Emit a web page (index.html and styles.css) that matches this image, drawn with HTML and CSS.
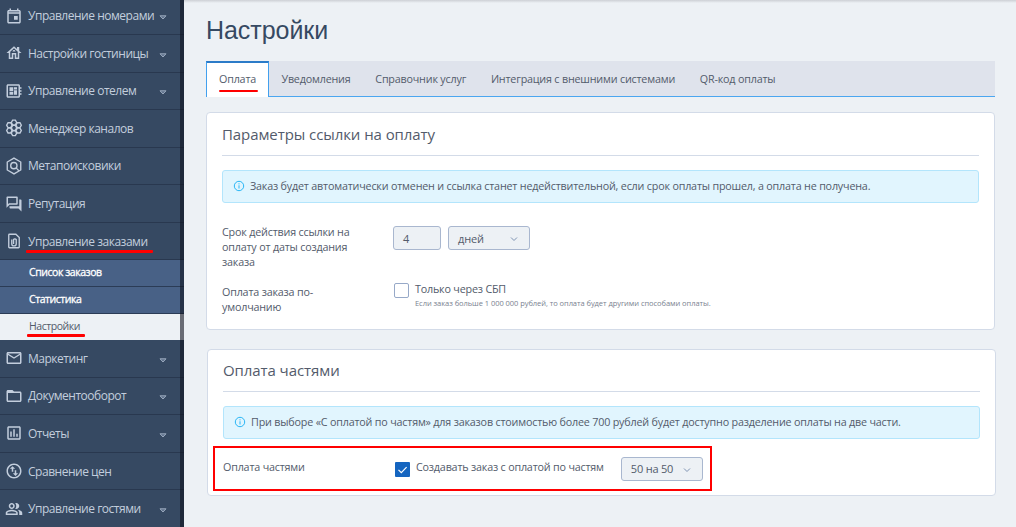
FILE: index.html
```html
<!DOCTYPE html>
<html lang="ru">

<head>
    <meta charset="UTF-8">
    <meta name="viewport" content="width=device-width, initial-scale=1.0">
    <title>Настройки</title>
    <link rel="stylesheet" href="styles.css">
</head>

<body>
    <aside class="sidebar">
        <ul class="menu">
            <li class="menu-item">
                <svg class="icon" viewBox="0 0 24 24"><path d="M19 4h-1V2h-2v2H8V2H6v2H5c-1.1 0-2 .9-2 2v14c0 1.1.9 2 2 2h14c1.1 0 2-.9 2-2V6c0-1.1-.9-2-2-2zm0 16H5V9h14v11zm0-13H5V6h14v1zm-7 5h5v5h-5z"/></svg>
                <span>Управление номерами</span>
                <svg class="arrow" viewBox="0 0 8 5"><path d="M1 .8h6L4 4z"/></svg>
            </li>
            <li class="menu-item">
                <svg class="icon" viewBox="0 0 24 24"><path d="M19 9.3V4h-3v2.6L12 3 2 12h3v8h6v-6h2v6h6v-8h3l-3-2.700zM17 18h-2v-6H9v6H7v-7.810l5-4.500 5 4.500V18zM10 10h4c0-1.100-.9-2-2-2s-2 .9-2 2z"/></svg>
                <span>Настройки гостиницы</span>
                <svg class="arrow" viewBox="0 0 8 5"><path d="M1 .8h6L4 4z"/></svg>
            </li>
            <li class="menu-item">
                <svg class="icon" viewBox="0 0 24 24"><path d="M22 9V7h-2V5c0-1.100-.9-2-2-2H4c-1.100 0-2 .9-2 2v14c0 1.100.9 2 2 2h14c1.100 0 2-.9 2-2v-2h2v-2h-2v-2h2v-2h-2V9h2zm-4 10H4V5h14v14zM6 13h5v4H6zm6-6h4v3h-4zM6 7h5v5H6zm6 4h4v6h-4z"/></svg>
                <span>Управление отелем</span>
                <svg class="arrow" viewBox="0 0 8 5"><path d="M1 .8h6L4 4z"/></svg>
            </li>
            <li class="menu-item">
                <svg class="icon icon-line" viewBox="0 0 24 24"><path d="M10.200 1.500h3.600l1.800 3.200-1.800 3.200h-3.600L8.400 4.700zM10.200 8.500h3.600l1.800 3.300-1.800 3.300h-3.600l-1.800-3.300zM10.200 15.700h3.600l1.800 3.200-1.800 3.200h-3.600l-1.800-3.200zM4 5h3.600l1.800 3.200-1.800 3.200H4L2.200 8.200zM4 12.200h3.600l1.800 3.200-1.800 3.200H4l-1.800-3.200zM16.400 5H20l1.800 3.200-1.800 3.200h-3.600l-1.800-3.200zM16.400 12.200H20l1.800 3.200-1.800 3.200h-3.600l-1.800-3.200z"/></svg>
                <span>Менеджер каналов</span>
            </li>
            <li class="menu-item">
                <svg class="icon icon-line" viewBox="0 0 24 24"><path d="M12 1.500l9 5.200v10.600l-9 5.200-9-5.200V6.700z"/><circle cx="11.800" cy="11.500" r="4.200"/><path d="M14.800 14.500l3.700 3.700"/></svg>
                <span>Метапоисковики</span>
            </li>
            <li class="menu-item">
                <svg class="icon" viewBox="0 0 24 24"><path d="M15 4v7H5.170L4 12.170V4h11m1-2H3c-.55 0-1 .45-1 1v14l4-4h10c.55 0 1-.45 1-1V3c0-.55-.45-1-1-1zm5 4h-2v9H6v2c0 .55.45 1 1 1h11l4 4V7c0-.55-.45-1-1-1z"/></svg>
                <span>Репутация</span>
            </li>
            <li class="menu-item">
                <svg class="icon icon-line" viewBox="0 0 24 24"><path d="M14.500 3H6c-.6 0-1 .4-1 1v16c0 .6.4 1 1 1h12c.6 0 1-.4 1-1V7.500z"/><path d="M9 10v5.500a3 3 0 0 0 6 0V10.200a2 2 0 0 0-3.600 0V16"/></svg>
                <span class="marked">Управление заказами</span>
            </li>
        </ul>
        <ul class="submenu">
            <li>Список заказов</li>
            <li>Статистика</li>
            <li class="active"><span class="marked">Настройки</span></li>
        </ul>
        <ul class="menu">
            <li class="menu-item">
                <svg class="icon" viewBox="0 0 24 24"><path d="M22 6c0-1.100-.9-2-2-2H4c-1.100 0-2 .9-2 2v12c0 1.100.9 2 2 2h16c1.100 0 2-.9 2-2V6zm-2 0l-8 5-8-5h16zm0 12H4V8l8 5 8-5v10z"/></svg>
                <span>Маркетинг</span>
                <svg class="arrow" viewBox="0 0 8 5"><path d="M1 .8h6L4 4z"/></svg>
            </li>
            <li class="menu-item">
                <svg class="icon" viewBox="0 0 24 24"><path d="M20 6h-8l-2-2H4c-1.100 0-2 .9-2 2v12c0 1.100.9 2 2 2h16c1.100 0 2-.9 2-2V8c0-1.100-.9-2-2-2zm0 12H4V8h16v10z"/></svg>
                <span>Документооборот</span>
                <svg class="arrow" viewBox="0 0 8 5"><path d="M1 .8h6L4 4z"/></svg>
            </li>
            <li class="menu-item">
                <svg class="icon" viewBox="0 0 24 24"><path d="M19 3H5c-1.100 0-2 .9-2 2v14c0 1.100.9 2 2 2h14c1.100 0 2-.9 2-2V5c0-1.100-.9-2-2-2zm0 16H5V5h14v14zM7 10h2v7H7zm4-3h2v10h-2zm4 6h2v4h-2z"/></svg>
                <span>Отчеты</span>
                <svg class="arrow" viewBox="0 0 8 5"><path d="M1 .8h6L4 4z"/></svg>
            </li>
            <li class="menu-item">
                <svg class="icon" viewBox="0 0 24 24"><path d="M12 2C6.480 2 2 6.480 2 12s4.480 10 10 10 10-4.480 10-10S17.520 2 12 2zm0 18c-4.410 0-8-3.590-8-8s3.590-8 8-8 8 3.590 8 8-3.590 8-8 8zM6.500 9L10 5.500 13.500 9H11v4H9V9H6.500zm11 6L14 18.500 10.500 15H13v-4h2v4h2.500z"/></svg>
                <span>Сравнение цен</span>
            </li>
            <li class="menu-item">
                <svg class="icon" viewBox="0 0 24 24"><path d="M16.670 13.130C18.040 14.060 19 15.320 19 17v3h4v-3c0-2.180-3.570-3.470-6.330-3.870zM15 12c2.210 0 4-1.790 4-4s-1.790-4-4-4c-.47 0-.91.1-1.330.24C14.500 5.270 15 6.580 15 8s-.5 2.730-1.330 3.760c.42.14.86.24 1.330.24zM9 12c2.210 0 4-1.790 4-4s-1.790-4-4-4-4 1.790-4 4 1.790 4 4 4zm0-6c1.100 0 2 .9 2 2s-.9 2-2 2-2-.9-2-2 .9-2 2-2zM9 13c-2.670 0-8 1.340-8 4v3h16v-3c0-2.660-5.330-4-8-4zm6 5H3v-.99C3.200 16.290 6.300 15 9 15s5.800 1.290 6 2v1z"/></svg>
                <span>Управление гостями</span>
                <svg class="arrow" viewBox="0 0 8 5"><path d="M1 .8h6L4 4z"/></svg>
            </li>
        </ul>
        <div class="scrollbar"></div>
    </aside>

    <main>
        <h1>Настройки</h1>

        <nav class="tabs">
            <a class="tab active"><span class="marked">Оплата</span></a>
            <a class="tab">Уведомления</a>
            <a class="tab">Справочник услуг</a>
            <a class="tab">Интеграция с внешними системами</a>
            <a class="tab">QR-код оплаты</a>
        </nav>

        <section class="panel">
            <h2>Параметры ссылки на оплату</h2>
            <div class="notice">
                <svg class="info" viewBox="0 0 12 12"><circle cx="6" cy="6" r="4.700"/><path d="M6 5.300v3.200M6 3.300v1.100"/></svg>
                <span>Заказ будет автоматически отменен и ссылка станет недействительной, если срок оплаты прошел, а оплата не получена.</span>
            </div>
            <div class="row row-period">
                <div class="label">Срок действия ссылки на оплату от даты создания заказа</div>
                <div class="field field-number">4</div>
                <div class="field field-select">дней
                    <svg class="chevron" viewBox="0 0 8 6"><path d="M1 1.500l3 3 3-3"/></svg>
                </div>
            </div>
            <div class="row row-default">
                <div class="label">Оплата заказа по-умолчанию</div>
                <div class="checkbox"></div>
                <div class="option">
                    <p>Только через СБП</p>
                    <p class="hint">Если заказ больше 1 000 000 рублей, то оплата будет другими способами оплаты.</p>
                </div>
            </div>
        </section>

        <section class="panel panel-parts">
            <h2>Оплата частями</h2>
            <div class="notice">
                <svg class="info" viewBox="0 0 12 12"><circle cx="6" cy="6" r="4.700"/><path d="M6 5.300v3.200M6 3.300v1.100"/></svg>
                <span>При выборе «С оплатой по частям» для заказов стоимостью более 700 рублей будет доступно разделение оплаты на две части.</span>
            </div>
            <div class="row row-parts">
                <div class="label">Оплата частями</div>
                <div class="checkbox checked">
                    <svg viewBox="0 0 15 15"><path d="M3.500 7.800l2.800 2.800 5.300-5.500"/></svg>
                </div>
                <div class="option">Создавать заказ с оплатой по частям</div>
                <div class="field field-select">50 на 50
                    <svg class="chevron" viewBox="0 0 8 6"><path d="M1 1.500l3 3 3-3"/></svg>
                </div>
            </div>
        </section>
    </main>
</body>

</html>
```
FILE: styles.css
```css
/* General Reset */
* {
    margin: 0;
    padding: 0;
    box-sizing: border-box;
}

body {
    display: flex;
    height: 527px;
    overflow: hidden;
    font-family: "Open Sans", "Noto Sans", sans-serif;
    font-size: 10.750px;
    letter-spacing: -0.19px;
    line-height: 15px;
    color: #535b6b;
    background: #edf1f5;
}

/* Sidebar */
.sidebar {
    position: relative;
    flex: none;
    width: 184px;
    background: #364962;
    overflow: hidden;
}

ul {
    list-style: none;
}

.menu:first-child {
    margin-top: -2.500px;
}

.menu-item {
    display: flex;
    align-items: center;
    height: 37.550px;
    padding: 0 17px 0 5px;
    border-bottom: 1px solid #29384f;
    font-size: 12px;
    letter-spacing: -0.48px;
    color: #c3cedd;
}

.menu-item span {
    flex: 1;
    white-space: nowrap;
}

.menu-item .marked {
    flex: none;
}

.icon {
    flex: none;
    width: 18px;
    height: 18px;
    margin-right: 5px;
    fill: #c3cedd;
}

.icon-line {
    fill: none;
    stroke: #c3cedd;
    stroke-width: 1.800;
}

.arrow {
    width: 8px;
    height: 5px;
    margin-top: 4px;
    fill: #5d708a;
    stroke: #9aa9bd;
}

.submenu li {
    height: 26.600px;
    padding-left: 29px;
    border-bottom: 1px solid #2b3c56;
    line-height: 25px;
    font-size: 10.500px;
    letter-spacing: -0.45px;
    color: #fff;
    background: #486186;
    -webkit-text-stroke: 0.3px #fff;
}

.submenu .active {
    color: #535b6b;
    background: #edf1f5;
    border-bottom: 0;
    line-height: 25px;
    -webkit-text-stroke: 0;
}

.scrollbar {
    position: absolute;
    top: 0;
    right: 0;
    width: 4px;
    height: 100%;
    background: rgba(16, 20, 31, 0.6);
}

/* Red pen underline */
.marked {
    position: relative;
}

.marked::after {
    content: "";
    position: absolute;
    left: -2px;
    right: -5px;
    bottom: -4px;
    height: 2.500px;
    border-radius: 1px;
    background: #f00;
}

/* Content */
main {
    flex: 1;
    min-width: 0;
    padding: 15px 21px 0 22px;
    background: linear-gradient(#cdd0d5, #edf1f5 3px);
}

h1 {
    font-family: "Liberation Sans", Arial, sans-serif;
    font-size: 25px;
    font-weight: normal;
    letter-spacing: -0.05px;
    line-height: 31px;
    color: #364962;
}

.tabs {
    display: flex;
    height: 36px;
    margin-top: 15px;
    background: #dfe3ec;
    border-bottom: 1px solid #4ba6f0;
}

.tab {
    padding: 0 12.400px;
    line-height: 37px;
}

.tab.active {
    height: 36px;
    padding: 0 12px;
    line-height: 33px;
    background: #fff;
    border: 1px solid #42a0ee;
    border-top: 2px solid #2b7bc8;
    border-bottom: 0;
}

.tab .marked {
    display: inline-block;
    line-height: 15px;
}

.tab .marked::after {
    left: 0;
    right: -2px;
    bottom: -5px;
}

.panel {
    height: 218px;
    margin-top: 15px;
    padding: 0 15px;
    background: #fff;
    border: 1px solid #d3dbe8;
    border-radius: 4px;
}

h2 {
    height: 43px;
    padding-top: 11px;
    border-bottom: 1px solid #d3dbe8;
    font-size: 15px;
    font-weight: normal;
    letter-spacing: -0.08px;
    line-height: 20px;
}

.notice {
    display: flex;
    align-items: center;
    height: 33px;
    margin-top: 14px;
    padding: 0 10px 1px;
    background: #e1f5fe;
    border: 1px solid #b3e5fc;
    border-radius: 3px;
    white-space: nowrap;
}

.info {
    width: 12px;
    height: 12px;
    margin-right: 5px;
    fill: none;
    stroke: #29b6f6;
}

.row {
    display: flex;
    align-items: flex-start;
}

.row-period {
    margin-top: 22px;
}

.row-period .field {
    margin-top: 1px;
    line-height: 23px;
}

.row-default {
    margin-top: 15px;
}

.label {
    flex: none;
    width: 135px;
    margin-right: 36px;
}

.field {
    position: relative;
    height: 24px;
    padding-left: 9px;
    font-size: 11px;
    line-height: 22px;
    background: #edf1f5;
    border: 1px solid #a9b7cf;
    border-radius: 3px;
}

.field-number {
    width: 48px;
    margin-right: 7px;
}

.field-select {
    width: 82px;
}

.chevron {
    position: absolute;
    top: 9px;
    right: 11px;
    width: 8px;
    height: 6px;
    fill: none;
    stroke: #7e93b3;
}

.checkbox {
    flex: none;
    width: 15px;
    height: 15px;
    margin: -2px 6px 0 1px;
    background: #fff;
    border: 1px solid #97a9c8;
    border-radius: 2px;
}

.checkbox.checked {
    background: #1565c0;
    border: 0;
    border-radius: 1px;
}

.checkbox svg {
    display: block;
    fill: none;
    stroke: #fff;
    stroke-width: 1.200;
}

.row-default .option {
    margin-top: -3px;
}

.hint {
    font-size: 7.500px;
    letter-spacing: -0.05px;
    line-height: 13px;
    color: #7a8290;
}

.panel-parts {
    height: 147px;
    margin: 19px -1px 0 1px;
}

.panel-parts h2 {
    height: 42px;
    padding-top: 10px;
}

/* Highlighted row */
.row-parts {
    align-items: center;
    width: 499px;
    height: 45px;
    margin: 7px 0 0 -10px;
    padding-left: 8px;
    border: 2px solid #f00;
}

.row-parts .label {
    margin-top: -2px;
}

.row-parts .checkbox {
    margin-top: 2px;
}

.row-parts .option {
    margin: -2px 17px 0 0;
    white-space: nowrap;
}
```
